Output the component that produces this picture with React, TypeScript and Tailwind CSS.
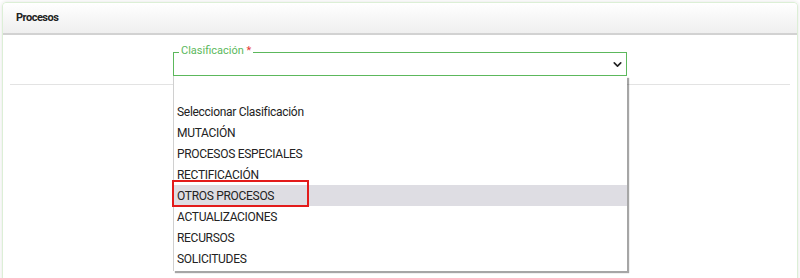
import React from 'react';
import { ChevronDown } from 'lucide-react';

const options = [
  '',
  'Seleccionar Clasificación',
  'MUTACIÓN',
  'PROCESOS ESPECIALES',
  'RECTIFICACIÓN',
  'OTROS PROCESOS',
  'ACTUALIZACIONES',
  'RECURSOS',
  'SOLICITUDES',
];

const App = () => {
  const selected = 'OTROS PROCESOS';

  return (
    <div
      className="w-[800px] h-[278px] overflow-hidden bg-white px-[2px] pt-[2px]"
      style={{ fontFamily: 'Roboto, "Liberation Sans", sans-serif' }}
    >
      <div className="h-[300px] rounded-[4px] border border-[#dcefd6] shadow-[0_0_4px_rgba(0,0,0,0.12)]">
        {/* Card header */}
        <div className="h-[32px] flex items-center px-[13px] bg-gradient-to-b from-white to-[#efefef] border-b-2 border-[#d2d2d2] rounded-t-[4px]">
          <span className="text-[11px] font-bold tracking-[-0.5px] text-[#222]">Procesos</span>
        </div>

        {/* Card body */}
        <div className="pt-[17px]">
          <div className="relative mx-auto w-[454px]">
            <div className="relative h-[24px] border border-[#5cb85c] flex items-center justify-end pr-[2px]">
              <span className="absolute left-[5px] top-[-9px] px-[2px] bg-white text-[11px] leading-[13px] text-[#5cb85c]">
                Clasificación <span className="text-[#e53935]">*</span>
              </span>
              <ChevronDown size={13} strokeWidth={3} className="text-[#222]" />
            </div>

            {/* Open select list */}
            <div className="absolute left-0 top-full z-10 w-[454px] bg-white border-l border-[#d0d0d0] pt-[4px] pb-[2px] shadow-[2px_2px_1px_rgba(0,0,0,0.35)]">
              {options.map((o, i) => (
                <div
                  key={i}
                  className={
                    'h-[21px] flex items-center pl-[3px] text-[12px] tracking-[-0.3px] text-[#222] ' +
                    (o === selected ? 'bg-[#dedde3]' : '')
                  }
                >
                  {o}
                </div>
              ))}
              <div className="absolute left-[-2px] top-[104px] w-[137px] h-[27px] border-2 border-[#e31b1b]" />
            </div>
          </div>

          <div className="mx-[7px] mt-[8px] h-px bg-[#e3e3e3]" />
        </div>
      </div>
    </div>
  );
};

export default App;
